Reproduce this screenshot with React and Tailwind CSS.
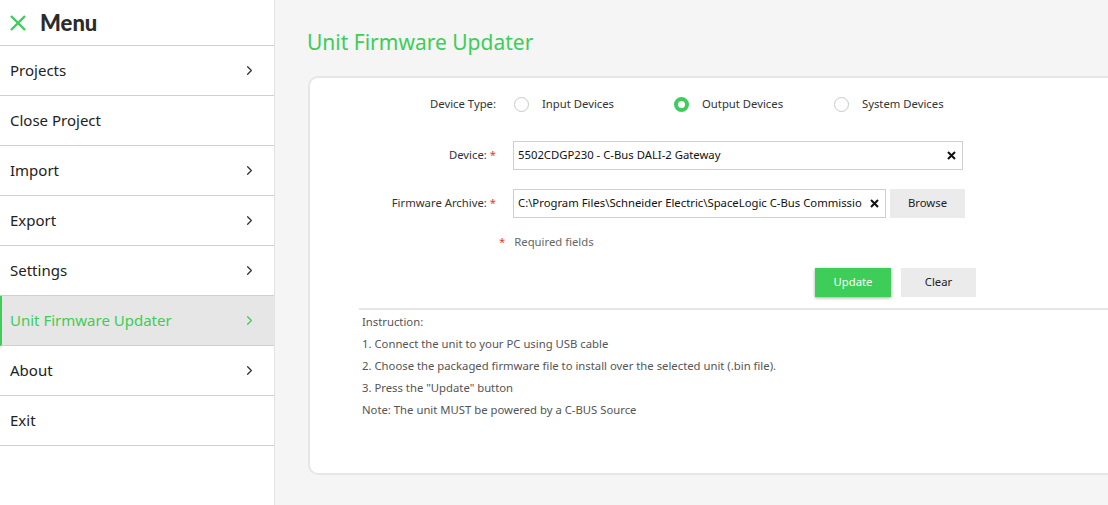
import { ChevronRight } from 'lucide-react'

const items = [
  ['Projects', true],
  ['Close Project', false],
  ['Import', true],
  ['Export', true],
  ['Settings', true],
  ['Unit Firmware Updater', true],
  ['About', true],
  ['Exit', false],
]

const Radio = ({ checked, label }) => (
  <div className="flex items-center">
    {checked
      ? <span className="w-[15px] h-[15px] rounded-full border-[4px] border-[#3dcd58] bg-white" />
      : <span className="w-[15px] h-[15px] rounded-full border border-[#c8c8c8] bg-white" />}
    <span className="ml-[13px]">{label}</span>
  </div>
)

const Cross = () => (
  <svg width="9" height="9" viewBox="0 0 9 9"><path d="M1 1L8 8M8 1L1 8" stroke="#111" strokeWidth="2" /></svg>
)

export default function App() {
  const active = 'Unit Firmware Updater'
  return (
    <div className="flex w-[1108px] h-[505px] overflow-hidden bg-[#f5f5f5]" style={{ fontFamily: '"Noto Sans", sans-serif' }}>
      {/* sidebar */}
      <div className="w-[275px] shrink-0 bg-white border-r border-[#e2e2e2] h-full">
        <div className="h-[46px] flex items-center pl-[9px] border-b border-[#d0d0d0]">
          <svg width="18" height="18" viewBox="0 0 18 18"><path d="M2 2L16 16M16 2L2 16" stroke="#3dcd58" strokeWidth="2.4" /></svg>
          <span className="ml-[13px] text-[22px] font-black text-[#2b2b2b]" style={{ fontFamily: 'Lato, sans-serif' }}>Menu</span>
        </div>
        {items.map(([l, chev]) => (
          <div key={l} className={`h-[50px] flex items-center justify-between pr-[17px] border-b border-[#d0d0d0] text-[15px] ${l === active ? 'bg-[#e6e6e6] text-[#3dcd58] border-l-2 border-l-[#3dcd58] pl-[8px]' : 'text-[#222] pl-[10px]'}`}>
            <span>{l}</span>
            {chev && <ChevronRight size={15} strokeWidth={2} className={l === active ? 'text-[#3dcd58]' : 'text-[#333]'} />}
          </div>
        ))}
      </div>

      {/* main */}
      <div className="flex-1 pl-[32px] pt-[27px]">
        <h1 className="text-[21px] text-[#3dcd58] leading-[30px] mb-[19px]">Unit Firmware Updater</h1>
        <div className="bg-white border-2 border-r-0 border-[#e6e6e6] rounded-l-[10px] h-[399px] ml-[1px] text-[11.3px] text-[#333]" style={{ fontFamily: '"Segoe UI", "Noto Sans", sans-serif' }}>
          <div className="pt-[14px]">
            <div className="flex items-center h-[24px] whitespace-nowrap">
              <span className="w-[186px] text-right mr-[18px]">Device Type:</span>
              <div className="w-[160px]"><Radio label="Input Devices" /></div>
              <div className="w-[160px]"><Radio checked label="Output Devices" /></div>
              <Radio label="System Devices" />
            </div>
            <div className="flex items-center mt-[25px] whitespace-nowrap">
              <span className="w-[186px] text-right mr-[17px]">Device: <span className="text-[#e53935]">*</span></span>
              <div className="w-[450px] h-[29px] border border-[#cfcfcf] flex items-center justify-between pl-[4px] pr-[6px] text-[#111]">
                <span>5502CDGP230 - C-Bus DALI-2 Gateway</span>
                <Cross />
              </div>
            </div>
            <div className="flex items-center mt-[19px] whitespace-nowrap">
              <span className="w-[186px] text-right mr-[17px]">Firmware Archive: <span className="text-[#e53935]">*</span></span>
              <div className="w-[373px] h-[29px] border border-[#cfcfcf] flex items-center justify-between pl-[4px] pr-[6px] text-[#111]">
                <span className="whitespace-nowrap overflow-hidden w-[345px]">C:\Program Files\Schneider Electric\SpaceLogic C-Bus Commissio</span>
                <Cross />
              </div>
              <button className="ml-[4px] w-[75px] h-[29px] bg-[#ebebeb] text-[#222]">Browse</button>
            </div>
            <div className="flex items-center mt-[16px] ml-[189px]">
              <span className="text-[#e53935] mr-[9px]">*</span>
              <span className="text-[#666]">Required fields</span>
            </div>
            <div className="flex mt-[17px] ml-[505px]">
              <button className="w-[76px] h-[29px] bg-[#3dcd58] text-white shadow-[0_1px_3px_rgba(0,0,0,0.35)]">Update</button>
              <button className="ml-[10px] w-[75px] h-[29px] bg-[#ebebeb] text-[#222]">Clear</button>
            </div>
          </div>
          <div className="ml-[49px] mt-[11px] border-t-2 border-[#e6e6e6] pt-[1px] pl-[3px] text-[#555] leading-[22px]">
            <p>Instruction:</p>
            <p>1. Connect the unit to your PC using USB cable</p>
            <p>2. Choose the packaged firmware file to install over the selected unit (.bin file).</p>
            <p>3. Press the "Update" button</p>
            <p>Note: The unit MUST be powered by a C-BUS Source</p>
          </div>
        </div>
      </div>
    </div>
  )
}
